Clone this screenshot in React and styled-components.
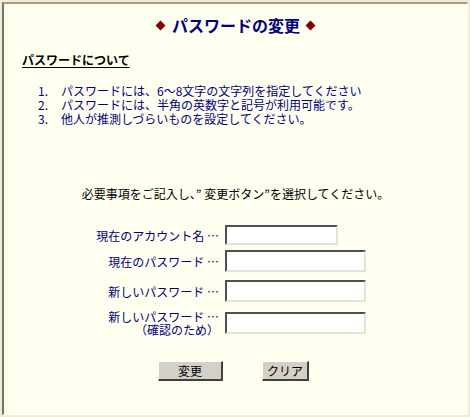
import React from "react";
import styled, { createGlobalStyle } from "styled-components";

const Global = createGlobalStyle`
  html, body { margin: 0; padding: 0; background: #f3ecd3; }
  body { font-family: "Noto Sans CJK JP", "DejaVu Sans", sans-serif; font-size: 12px; }
  * { box-sizing: border-box; }
`;

const Frame = styled.div`
  margin: 2px;
  width: 466px;
  height: 413px;
  background: #fffff0;
  border-style: solid;
  border-width: 2px 1px 1px 2px;
  border-color: #a59d86 #ffffff #ffffff #77736a;
  display: flex;
  flex-direction: column;
  color: #000;
`;

const Title = styled.h1`
  margin: 11px 0 0;
  height: 20px;
  line-height: 20px;
  font-size: 16px;
  font-weight: bold;
  color: #000080;
  display: flex;
  align-items: center;
  justify-content: center;
`;

const Diamond = styled.span`
  display: inline-block;
  width: 7px;
  height: 7px;
  background: #800000;
  transform: rotate(45deg);
  margin: 0 ${(p) => (p.$side === "left" ? "8px 0 2px" : "2px 0 7px")};
`;

const Heading = styled.h2`
  margin: 17px 0 0 18px;
  font-size: 12px;
  line-height: 16px;
  height: 16px;
  font-weight: bold;
  text-decoration: underline;
  text-underline-offset: 2px;
`;

const List = styled.ol`
  list-style: none;
  margin: 16px 0 0;
  padding: 0 0 0 34px;
  color: #000080;
`;

const Item = styled.li`
  display: flex;
  line-height: 14px;
  height: 14px;
`;

const Num = styled.span`
  width: 23px;
  flex: none;
`;

const Instruction = styled.p`
  margin: 61px 0 0;
  text-align: center;
  line-height: 14px;
`;

const Form = styled.div`
  margin: 24px 0 0 16px;
  display: grid;
  grid-template-columns: 199px auto;
  column-gap: 6px;
  align-items: center;
`;

const Label = styled.label`
  text-align: right;
  color: #000080;
  line-height: 13px;
  margin-top: ${(p) => p.$top || 0}px;
`;

const Input = styled.input`
  width: ${(p) => p.$w}px;
  height: ${(p) => p.$h}px;
  margin: ${(p) => p.$top || 0}px 0 0;
  padding: 0 2px;
  background: #fff;
  border-style: solid;
  border-width: 2px;
  border-color: #505050 #e4e2dc #e4e2dc #505050;
  font: inherit;
  outline: none;
`;

const Buttons = styled.div`
  margin: 25px 0 0 154px;
  display: flex;
  gap: 39px;
`;

const Button = styled.button`
  width: ${(p) => p.$w}px;
  height: 20px;
  padding: 0;
  background: #d4d0c8;
  border-style: solid;
  border-width: 1px 2px 2px 1px;
  border-color: #ffffff #404040 #404040 #ffffff;
  font: inherit;
  color: #000;
  line-height: 16px;
`;

const fields = [
  { label: "現在のアカウント名 …", w: 113, h: 20, top: 0 },
  { label: "現在のパスワード …", w: 141, h: 22, top: 5 },
  { label: "新しいパスワード …", w: 141, h: 22, top: 8 },
  { label: ["新しいパスワード …", "（確認のため）"], w: 141, h: 22, top: 8 },
];

const rules = [
  "パスワードには、6～8文字の文字列を指定してください",
  "パスワードには、半角の英数字と記号が利用可能です。",
  "他人が推測しづらいものを設定してください。",
];

export default function App() {
  return (
    <>
      <Global />
      <Frame>
        <Title>
          <Diamond $side="left" />
          パスワードの変更
          <Diamond $side="right" />
        </Title>
        <Heading>パスワードについて</Heading>
        <List>
          {rules.map((r, i) => (
            <Item key={i}>
              <Num>{i + 1}.</Num>
              {r}
            </Item>
          ))}
        </List>
        <Instruction>必要事項をご記入し、” 変更ボタン”を選択してください。</Instruction>
        <Form>
          {fields.map((f, i) => (
            <React.Fragment key={i}>
              <Label $top={f.top}>
                {Array.isArray(f.label)
                  ? f.label.map((l, j) => <div key={j}>{l}</div>)
                  : f.label}
              </Label>
              <Input
                type={i === 0 ? "text" : "password"}
                $w={f.w}
                $h={f.h}
                $top={f.top}
              />
            </React.Fragment>
          ))}
        </Form>
        <Buttons>
          <Button $w={65}>変更</Button>
          <Button $w={47}>クリア</Button>
        </Buttons>
      </Frame>
    </>
  );
}
